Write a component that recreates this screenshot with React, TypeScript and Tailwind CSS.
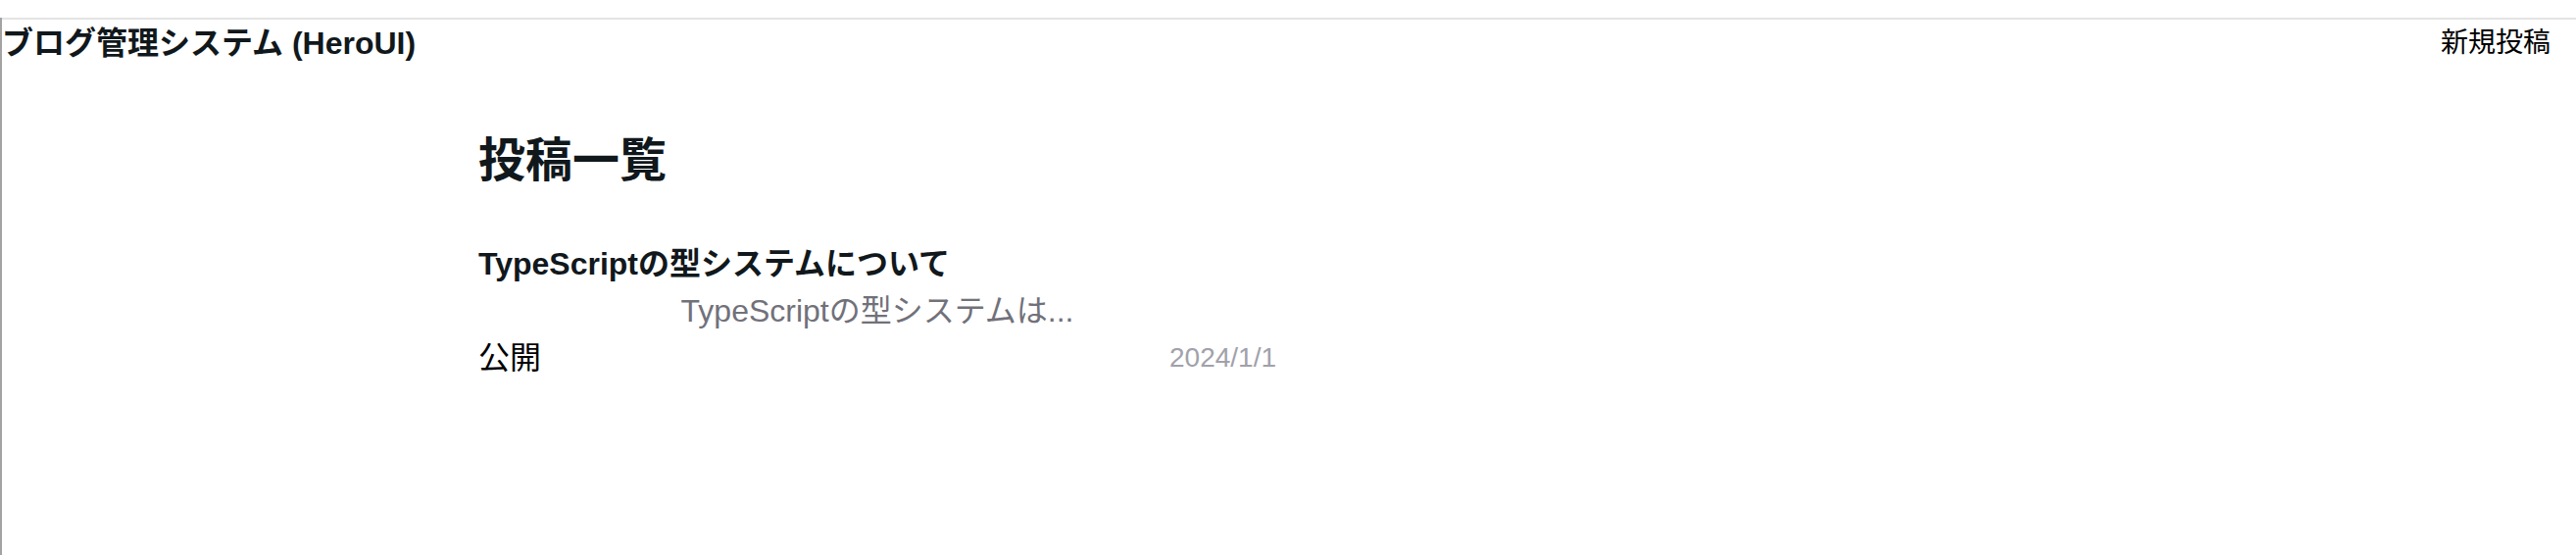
import React from "react";

interface IPost {
  id: number;
  title: string;
  excerpt: string;
  status: string;
  date: string;
}

const posts: IPost[] = [
  {
    id: 1,
    title: "TypeScriptの型システムについて",
    excerpt: "TypeScriptの型システムは...",
    status: "公開",
    date: "2024/1/1",
  },
];

const font = {
  fontFamily: '"Liberation Sans", "Noto Sans CJK JP", sans-serif',
};

const App: React.FC = () => {
  return (
    <div
      className="min-h-[566px] bg-white border-l-2 border-[#a3a3a3] text-[#11181c]"
      style={font}
    >
      {/* header */}
      <div className="mt-[18px] border-t-2 border-[#e4e4e4]">
        <div className="flex items-center justify-between pr-[26px]">
          <h1 className="text-[32px] leading-[48px] font-bold">
            ブログ管理システム (HeroUI)
          </h1>
          <button className="text-[28px] leading-[48px] text-black">
            新規投稿
          </button>
        </div>
      </div>

      {/* list */}
      <main className="pl-[486px] pt-[64px]">
        <h2 className="text-[48px] leading-[64px] font-bold">投稿一覧</h2>
        <div className="mt-[49px] flex flex-col">
          {posts.map((post) => (
            <div key={post.id} className="w-[814px]">
              <h3 className="text-[32px] leading-[48px] font-bold">
                {post.title}
              </h3>
              <p className="text-[32px] leading-[48px] text-center text-[#71717a]">
                {post.excerpt}
              </p>
              <div className="flex items-center justify-between h-[48px]">
                <span className="text-[32px] text-black">{post.status}</span>
                <span className="text-[28px] text-[#a1a1aa]">{post.date}</span>
              </div>
            </div>
          ))}
        </div>
      </main>
    </div>
  );
};

export default App;
